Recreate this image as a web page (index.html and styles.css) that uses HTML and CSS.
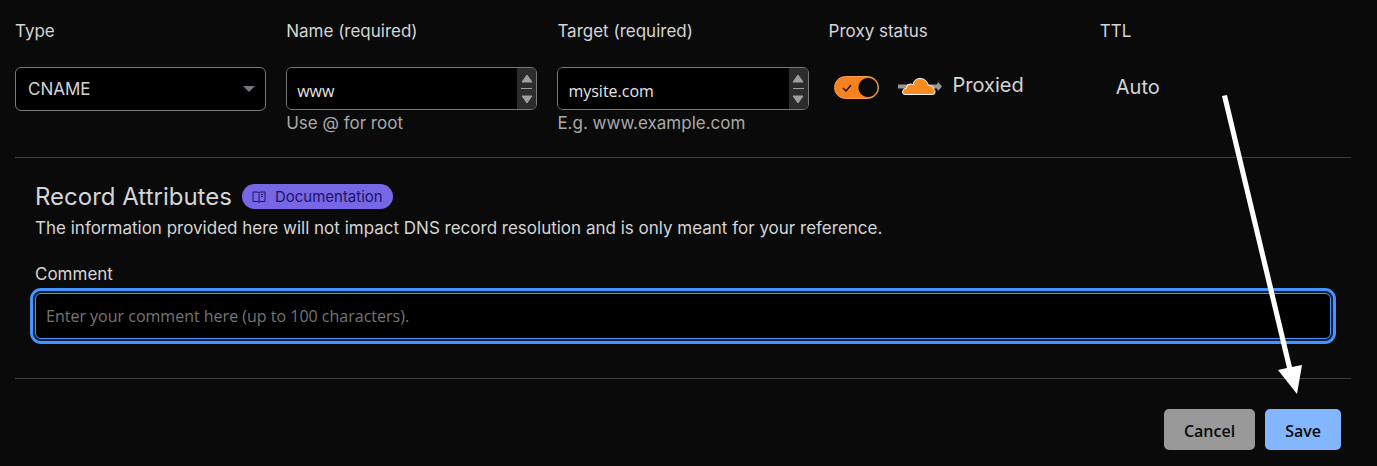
FILE: index.html
```html
<!DOCTYPE html>
<html lang="en">
<head>
<meta charset="utf-8">
<title>DNS record</title>
<link rel="stylesheet" href="styles.css">
</head>
<body>
<form class="record">
  <div class="fields">
    <div class="field">
      <label class="label" for="type">Type</label>
      <div class="select-wrap">
        <select class="select" id="type"><option>CNAME</option><option>A</option><option>TXT</option></select>
        <svg class="caret" viewBox="0 0 12 6" aria-hidden="true"><path d="M0 0H12L6 6Z"/></svg>
      </div>
    </div>
    <div class="field">
      <label class="label" for="name">Name (required)</label>
      <div class="stepper">
        <input class="stepper-input" id="name" type="text" value="www">
        <div class="stepper-bar">
          <button class="step" type="button" aria-label="Scroll up"><svg viewBox="0 0 12 9"><path d="M6 1L11 8H1Z"/></svg></button>
          <button class="step" type="button" aria-label="Scroll down"><svg viewBox="0 0 12 9"><path d="M1 1H11L6 8Z"/></svg></button>
        </div>
      </div>
      <p class="hint">Use @ for root</p>
    </div>
    <div class="field">
      <label class="label" for="target">Target (required)</label>
      <div class="stepper">
        <input class="stepper-input" id="target" type="text" value="mysite.com">
        <div class="stepper-bar">
          <button class="step" type="button" aria-label="Scroll up"><svg viewBox="0 0 12 9"><path d="M6 1L11 8H1Z"/></svg></button>
          <button class="step" type="button" aria-label="Scroll down"><svg viewBox="0 0 12 9"><path d="M1 1H11L6 8Z"/></svg></button>
        </div>
      </div>
      <p class="hint">E.g. www.example.com</p>
    </div>
    <div class="field">
      <label class="label" for="proxy">Proxy status</label>
      <div class="proxy">
        <span class="toggle">
          <input class="toggle-input" id="proxy" type="checkbox" checked>
          <svg class="toggle-check" viewBox="0 0 10 8" aria-hidden="true"><path d="M1 4L4 7L9 1"/></svg>
        </span>
        <svg class="cloud" viewBox="0 0 45 18" aria-hidden="true">
          <path class="cloud-arrow" d="M0 6.5H39L40 4L44 8.5L40 13L39 10.5H0Z"/>
          <path class="cloud-body" d="M7 16.5Q4.500 16.500 4.500 14Q4.500 11 8.500 10Q8.500 6 12 6Q14 6 15 7Q16 .5 22 .5Q28.500 .5 30.500 7.500Q35.500 7.500 36 11.500Q37 12 37 14Q37 16.500 34.500 16.500Z"/>
        </svg>
        <span class="proxy-text">Proxied</span>
      </div>
    </div>
    <div class="field">
      <span class="label">TTL</span>
      <span class="ttl">Auto</span>
    </div>
  </div>

  <section class="attributes">
    <div class="heading">
      <h2 class="title">Record Attributes</h2>
      <a class="doc" href="#docs">
        <svg class="doc-icon" viewBox="0 0 14 12" aria-hidden="true"><path d="M1 1H5Q7 1 7 2Q7 1 9 1H13V10.500H9Q7 10.500 7 11.500Q7 10.500 5 10.500H1ZM7 2V11M9 3.500H11M9 5.500H11"/></svg>
        <span>Documentation</span>
      </a>
    </div>
    <p class="description">The information provided here will not impact DNS record resolution and is only meant for your reference.</p>
    <label class="comment-label" for="comment">Comment</label>
    <input class="comment" id="comment" type="text" placeholder="Enter your comment here (up to 100 characters).">
  </section>

  <div class="actions">
    <button class="button" type="button">Cancel</button>
    <button class="button primary" type="submit">Save</button>
  </div>
  <svg class="pointer" viewBox="0 0 82 302" aria-hidden="true"><path d="M1 3L6 2L71 274L81 272L76 301L57 277L66 275Z"/></svg>
</form>
</body>
</html>
```
FILE: styles.css
```css
* { box-sizing: border-box; }
body {
  margin: 0;
  background: #0a0a0a;
  color: #d5d5d5;
  font: 17px/24px Inter, "Liberation Sans", sans-serif;
}
p, h2 { margin: 0; font-weight: 400; }
.record { position: relative; padding: 19px 26px 16px 15px; }
.fields {
  display: grid;
  grid-template-columns: repeat(5, minmax(0, 1fr));
  gap: 20px;
  padding-bottom: 22px;
  border-bottom: 1px solid #404040;
}
.field { display: flex; flex-direction: column; }
.label { margin-bottom: 24px; }
.select-wrap { position: relative; }
.select {
  width: 100%;
  height: 44px;
  padding: 0 12px;
  appearance: none;
  border: 1px solid #797979;
  border-radius: 6px;
  background: #000;
  color: #d5d5d5;
  font: inherit;
}
.caret { position: absolute; right: 11px; top: 19px; width: 12px; height: 6px; fill: #72777d; pointer-events: none; }
.stepper {
  display: flex;
  height: 43px;
  overflow: hidden;
  border: 1px solid #797979;
  border-radius: 6px;
  background: #000;
}
.stepper-input {
  flex: 1;
  min-width: 0;
  padding: 4px 10px 0;
  border: 0;
  outline: 0;
  background: #000;
  color: #e6e6e6;
  font: 16px/24px "Open Sans", "Noto Sans", sans-serif;
}
.stepper-bar { display: flex; flex-direction: column; width: 19px; padding: 0 4px; background: #2c2c2c; }
.step { display: flex; flex: 1; align-items: center; justify-content: center; padding: 0; border: 0; background: none; }
.step + .step { border-top: 1px solid #9f9f9f; }
.step svg { flex: none; width: 12px; height: 9px; fill: #9f9f9f; stroke: #9f9f9f; stroke-linejoin: round; }
.hint { margin-top: 1px; color: #a9a9a9; }
.proxy { display: flex; align-items: center; height: 40px; padding-left: 5px; }
.toggle { position: relative; display: flex; margin-right: 19px; }
.toggle-input {
  width: 45px;
  height: 23px;
  margin: 0;
  appearance: none;
  border: 1px solid #ffa04d;
  border-radius: 12px;
  background: radial-gradient(circle at 33px 50%, #0a0a0a 9px, #f6821f 10px);
}
.toggle-check { position: absolute; left: 8px; top: 8px; width: 10px; height: 8px; fill: none; stroke: #1b1008; stroke-width: 1.4; pointer-events: none; }
.cloud { width: 45px; height: 18px; margin-right: 10px; }
.cloud-arrow { fill: #999; }
.cloud-body { fill: #f98c1e; stroke: #fff; }
.proxy-text, .ttl { font-size: 20px; }
.proxy-text { padding-bottom: 4px; }
.ttl { padding: 8px 16px; }
.attributes { padding: 24px 20px 39px; border-bottom: 1px solid #404040; margin-bottom: 30px; }
.heading { display: flex; align-items: center; gap: 10px; height: 29px; }
.title { font-size: 24px; line-height: 30px; }
.doc {
  display: flex;
  align-items: center;
  gap: 9px;
  height: 25px;
  padding: 0 10px;
  border-radius: 13px;
  background: #7766e5;
  color: #1d1466;
  font-size: 15px;
  text-decoration: none;
}
.doc-icon { width: 14px; height: 12px; fill: none; stroke: currentColor; }
.description { margin: 5px 0 22px; }
.comment-label { display: block; margin-bottom: 7px; }
.comment {
  display: block;
  width: 100%;
  height: 46px;
  padding: 0 10px;
  border: 1px solid #4693ff;
  border-radius: 6px;
  outline: 3px solid #4693ff;
  outline-offset: 2px;
  box-shadow: 0 0 0 2px #13233c;
  background: #000;
  color: #e6e6e6;
  font: 16px/24px "Open Sans", "Noto Sans", sans-serif;
}
.comment::placeholder { color: #757575; opacity: 1; }
.actions { display: flex; justify-content: flex-end; gap: 10px; padding-right: 10px; }
.button {
  height: 41px;
  padding: 2px 20px 0;
  border: 0;
  border-radius: 5px;
  background: #999;
  color: #0a0a0a;
  font: 600 16px/24px "Open Sans", "Noto Sans", sans-serif;
}
.primary { background: #82b6ff; }
.pointer { position: absolute; right: 74px; top: 93px; width: 82px; height: 302px; fill: #fff; pointer-events: none; }
```
